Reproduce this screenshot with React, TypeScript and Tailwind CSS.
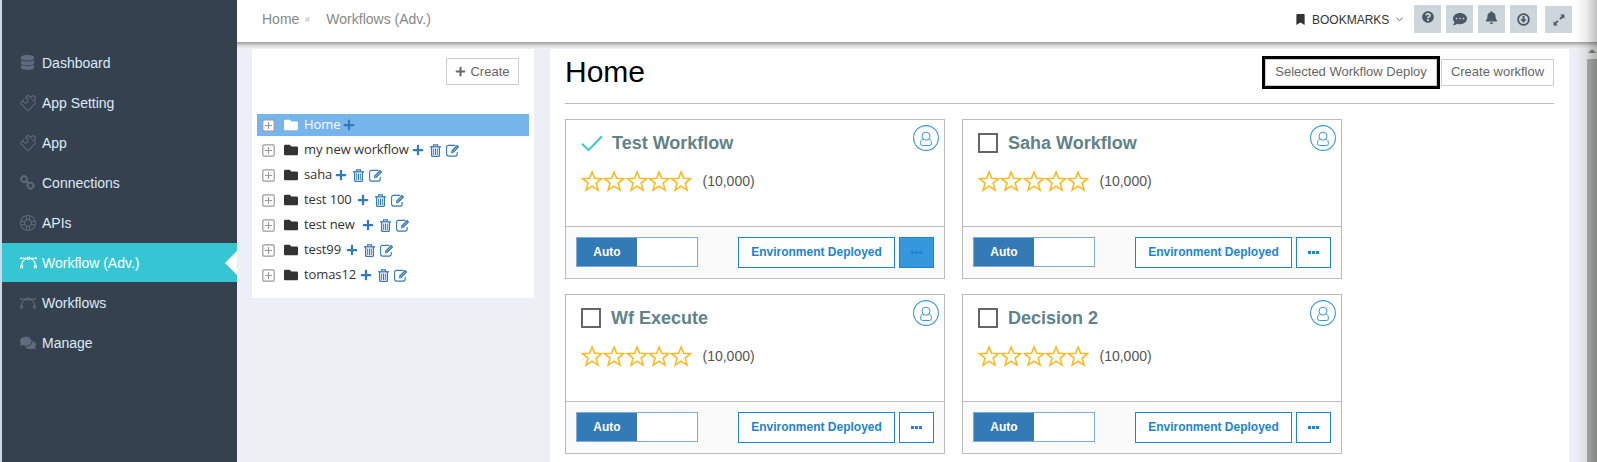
import React from "react";
import {
  FaBell,
  FaBookmark,
  FaCommentDots,
  FaComments,
  FaDatabase,
  FaFolder,
  FaPlus,
  FaQuestionCircle,
} from "react-icons/fa";
import { SlPuzzle, SlSupport, SlVector } from "react-icons/sl";

const ChainIcon = () => (
  <svg width="15" height="15" viewBox="0 0 15 15" fill="none" stroke="currentColor" strokeWidth="1.8">
    <rect x="1.3" y="1.3" width="5.6" height="5.4" rx="2" transform="rotate(45 4 4)" />
    <rect x="7.6" y="8" width="5.8" height="5.4" rx="2" transform="rotate(45 10.6 10.7)" />
    <path d="M5.4 5.4l3.6 3.6" />
  </svg>
);

const TrashIcon = () => (
  <svg width="11" height="13" viewBox="0 0 11 13" fill="none" stroke="currentColor">
    <path d="M0 2.8h11" strokeWidth="1.3" />
    <path d="M3.5 2.5V.9h4v1.6" strokeWidth="1.1" />
    <path d="M1.6 3v8.3q0 1.1 1 1.1h5.8q1 0 1-1.1V3" strokeWidth="1.3" />
    <path d="M3.7 4.5v6.5M5.5 4.5v6.5M7.3 4.5v6.5" strokeWidth="1" />
  </svg>
);

const EditIcon = () => (
  <svg width="14" height="13" viewBox="0 0 14 13" fill="none" stroke="currentColor">
    <path d="M9.4 1.4H2.6Q.6 1.4.6 3.3v6.8q0 2 2 2h6.6q2 0 2-2V8" strokeWidth="1.1" />
    <path d="M5.2 9.1l.5-2.6L11 1l2 1.9-5.3 5.5z" fill="currentColor" strokeWidth=".5" />
    <path d="M6.4 7.8l4.7-4.9" stroke="#fff" strokeWidth=".5" />
  </svg>
);

const ArrowDownCircle = () => (
  <svg width="13" height="13" viewBox="0 0 13 13" fill="none" stroke="currentColor">
    <circle cx="6.5" cy="6.5" r="5.4" strokeWidth="1.7" />
    <path d="M6.5 3v4" strokeWidth="2" />
    <path d="M3.3 6.2h6.4L6.5 9.8z" fill="currentColor" stroke="none" />
  </svg>
);

const ExpandIcon = () => (
  <svg width="12" height="12" viewBox="0 0 12 12" fill="currentColor">
    <path d="M7.2.6h4.2v4.2L10 3.4 7.6 5.8l-1.2-1.2L8.700 2.100zM.6 7.200l1.400 1.400 2.400-2.400 1.200 1.200-2.400 2.400 1.500 1.600H.6z" />
  </svg>
);

const UserIcon = () => (
  <svg width="26" height="26" viewBox="0 0 26 26" fill="none" stroke="#3598dc">
    <circle cx="13" cy="13" r="12.4" strokeWidth="1.1" />
    <circle cx="13" cy="11.2" r="4" strokeWidth="1" />
    <path d="M9.900 13.700Q7.500 15 7.500 18.300q0 2.200 2 2.200h7q2 0 2-2.200 0-3.300-2.400-4.600" strokeWidth="1" />
  </svg>
);

const Star = () => (
  <svg width="22.300" height="22" viewBox="0 0 22.300 22" fill="none" stroke="#fdb81e" strokeWidth="1.6">
    <path d="M11.100 2l2.500 6.300 7 .4-5.400 4.400 1.900 7-6-3.900-6 3.900 1.900-7L1.600 8.700l7-.4z" />
  </svg>
);

const nav = [
  { label: "Dashboard", icon: <FaDatabase size={15} /> },
  { label: "App Setting", icon: <SlPuzzle size={16} /> },
  { label: "App", icon: <SlPuzzle size={16} /> },
  { label: "Connections", icon: <ChainIcon /> },
  { label: "APIs", icon: <SlSupport size={16} /> },
  { label: "Workflow (Adv.)", icon: <SlVector size={17} />, active: true },
  { label: "Workflows", icon: <SlVector size={16} /> },
  { label: "Manage", icon: <FaComments size={16} /> },
];

const tree = [
  { label: "Home", w: "w-[39px]", selected: true },
  { label: "my new workflow", w: "w-[108px]" },
  { label: "saha", w: "w-[31px]" },
  { label: "test 100", w: "w-[53px]" },
  { label: "test new", w: "w-[58px]" },
  { label: "test99", w: "w-[42px]" },
  { label: "tomas12", w: "w-[56px]" },
];

const cards = [
  { title: "Test Workflow", checked: true },
  { title: "Saha Workflow" },
  { title: "Wf Execute" },
  { title: "Decision 2" },
];

function Sidebar() {
  return (
    <nav className="flex w-[237px] shrink-0 flex-col gap-px border-l-2 border-[#cbdae6] bg-[#364150] pt-[43px]">
      {nav.map((n) => (
        <a
          key={n.label}
          className={`flex h-[39px] items-center pl-[18px] text-sm ${n.active ? "bg-[#36c6d3] text-white" : "text-[#dcebf8]"}`}
        >
          <span className={`flex w-[22px] shrink-0 items-center ${n.active ? "text-white" : "text-[#606c7d]"}`}>{n.icon}</span>
          <span className="pt-px">{n.label}</span>
          {n.active && (
            <span className="ml-auto h-0 w-0 border-y-[12px] border-r-[12px] border-y-transparent border-r-white" />
          )}
        </a>
      ))}
    </nav>
  );
}

function Header() {
  const tool = "flex h-7 w-[27px] items-center justify-center bg-[#cdd6da] text-[#4c5867]";
  return (
    <header className="flex h-[42px] shrink-0 items-start bg-white pl-[25px] pr-[25px]">
      <div className="flex items-center pt-[9px] text-sm leading-5 text-[#888]">
        <span>Home</span>
        <span className="ml-[6px] mr-4 h-[5px] w-[5px] rounded-full bg-[#dcdcdc]" />
        <span>Workflows (Adv.)</span>
      </div>
      <div className="ml-auto flex items-start pt-[5px]">
        <div className="mr-[11px] flex h-[29px] items-center text-xs text-[#333]">
          <FaBookmark size={11} className="mr-[6px]" />
          <span className="w-[77px] whitespace-nowrap">BOOKMARKS</span>
          <svg className="ml-[7px]" width="7" height="5" viewBox="0 0 7 5" fill="none" stroke="#666">
            <path d="M.4.600l3.100 3.200L6.600.600" />
          </svg>
        </div>
        <div className="flex gap-[5px]">
          <span className={tool}><FaQuestionCircle size={12} className="-mt-1" /></span>
          <span className={tool}><FaCommentDots size={14} className="-mt-px" /></span>
          <span className={tool}><FaBell size={13} className="-mt-1" /></span>
          <span className={tool}><ArrowDownCircle /></span>
        </div>
        <span className="ml-2 mt-px flex h-[27px] w-[27px] items-center justify-center bg-[#cdd6da] text-[#4c5867]">
          <ExpandIcon />
        </span>
      </div>
    </header>
  );
}

function TreePanel() {
  return (
    <section className="h-[249px] w-[282px] shrink-0 bg-white px-[5px] pt-[9px]">
      <div className="flex justify-end pr-[10px]">
        <button className="flex h-[27px] w-[73px] items-center justify-center gap-1 border border-[#ccc] text-[13px] text-[#666]">
          <FaPlus size={11} />
          Create
        </button>
      </div>
      <ul className="mt-[29px] flex flex-col gap-[3px]">
        {tree.map((t) => (
          <li
            key={t.label}
            className={`flex h-[22px] items-center pl-[5px] ${t.selected ? "bg-[#76b4ec] text-white" : "text-[#333]"}`}
          >
            <svg width="13" height="13" viewBox="0 0 13 13" fill="none" stroke="#999">
              <rect x=".8" y=".8" width="11.400" height="11.400" rx="1.500" fill="#fff" strokeWidth="1.200" />
              <path d="M3 6.500h7M6.500 3v7" strokeWidth="1.200" />
            </svg>
            <FaFolder size={14} className={`ml-[9px] ${t.selected ? "text-white" : "text-[#333]"}`} />
            <span className={`ml-[6px] whitespace-nowrap font-['Open_Sans',sans-serif] text-[13px] tracking-[-0.1px] ${t.w}`}>
              {t.label}
            </span>
            <span className="flex items-center text-[#337ab7]">
              <FaPlus size={12} />
              {!t.selected && (
                <>
                  <span className="ml-[6px]"><TrashIcon /></span>
                  <span className="ml-[5px]"><EditIcon /></span>
                </>
              )}
            </span>
          </li>
        ))}
      </ul>
    </section>
  );
}

function Card({ title, checked }: { title: string; checked?: boolean }) {
  return (
    <article className="flex h-[160px] w-[380px] flex-col border border-[#bbb] bg-white">
      <div className="flex h-[106px] justify-between pl-[15px] pr-[5px]">
        <div className="pt-[13px]">
          <div className="flex h-5 items-center">
            {checked ? (
              <svg width="22" height="17" viewBox="0 0 22 17" fill="none" stroke="#36c6d3" strokeWidth="2">
                <path d="M1 8.800l6.500 6.400L21 1.200" />
              </svg>
            ) : (
              <span className="h-5 w-5 border-2 border-[#666]" />
            )}
            <h2 className={`whitespace-nowrap text-lg leading-5 font-bold text-[#5f8388] ${checked ? "ml-[9px]" : "ml-[10px]"}`}>
              {title}
            </h2>
          </div>
          <div className="mt-[17px] flex h-[22px] items-center">
            {[0, 1, 2, 3, 4].map((s) => (
              <Star key={s} />
            ))}
            <span className="ml-[10px] text-sm leading-5 text-[#555]">(10,000)</span>
          </div>
        </div>
        <div className="pt-[5px]">
          <UserIcon />
        </div>
      </div>
      <footer className="flex grow items-start border-t border-[#bbb] bg-[#fafafa] pl-[10px] pr-[10px] pt-[10px] text-xs font-bold">
        <div className="flex h-[30px] w-[122px] border border-[#7badd8] bg-white">
          <span className="flex w-[60px] items-center justify-center bg-[#337ab7] text-white">Auto</span>
        </div>
        <button className="ml-auto mr-1 h-[31px] w-[157px] border border-[#1c84d4] bg-white pb-[2px] text-[#1c84d4]">
          Environment Deployed
        </button>
        <button
          className={`flex h-[31px] w-[35px] items-center justify-center gap-px border border-[#1c84d4] text-[#1c84d4] ${checked ? "bg-[#3598dc]" : "bg-white"}`}
        >
          <i className="h-[3px] w-[3px] bg-current" />
          <i className="h-[3px] w-[3px] bg-current" />
          <i className="h-[3px] w-[3px] bg-current" />
        </button>
      </footer>
    </article>
  );
}

function MainPanel() {
  const button = "h-[27px] border border-[#ccc] bg-white pb-px text-[13px] whitespace-nowrap text-[#666]";
  return (
    <section className="ml-4 w-[1019px] shrink-0 bg-white px-[15px]">
      <div className="flex h-[55px] items-start justify-between border-b border-[#bbb]">
        <h1 className="pt-[3px] text-[30px] leading-[40px] text-black">Home</h1>
        <div className="flex items-center gap-px pt-[7px]">
          <div className="border-[3px] border-black">
            <button className={`${button} w-[172px]`}>Selected Workflow Deploy</button>
          </div>
          <button className={`${button} w-[113px]`}>Create workflow</button>
        </div>
      </div>
      <div className="mt-[15px] grid grid-cols-[380px_380px] gap-x-[17px] gap-y-[15px]">
        {cards.map((c) => (
          <Card key={c.title} {...c} />
        ))}
      </div>
    </section>
  );
}

export default function App() {
  return (
    <div className="relative flex h-[462px] w-[1597px] overflow-hidden bg-[#ecf0f4] font-['Liberation_Sans',Arial,sans-serif]">
      <Sidebar />
      <div className="flex grow flex-col">
        <Header />
        <div className="h-[7px] shrink-0 bg-linear-to-b from-[#a0a0a0] via-[#d8d8d8] to-[#f4f4f4]" />
        <main className="flex grow pl-[15px]">
          <TreePanel />
          <MainPanel />
          <div className="ml-auto flex w-[10px] flex-col items-center bg-[#b0b0b0]">
            <div className="flex h-[10px] w-full justify-center bg-[#ededed]">
              <i className="h-0 w-0 border-x-[4px] border-b-[4px] border-x-transparent border-b-[#888]" />
            </div>
          </div>
        </main>
      </div>
      <div className="pointer-events-none absolute inset-y-0 right-0 w-[22px] bg-linear-to-r from-transparent via-black/7 to-black/25" />
    </div>
  );
}
